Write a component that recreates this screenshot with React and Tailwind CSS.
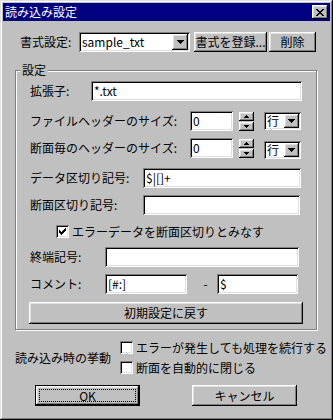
import React from "react";

const font = { fontFamily: '"Noto Sans CJK JP", "MS UI Gothic", sans-serif' };

const sunken =
  "bg-white shadow-[inset_1px_1px_#808080,inset_-1px_-1px_#ffffff,inset_2px_2px_#000000,inset_-2px_-2px_#dfdfdf]";
const raised =
  "bg-[#c0c0c0] shadow-[inset_-1px_-1px_#000000,inset_1px_1px_#ffffff,inset_-2px_-2px_#808080,inset_2px_2px_#dfdfdf]";

function Arrow() {
  return (
    <svg width="7" height="4" viewBox="0 0 7 4" shapeRendering="crispEdges">
      <path d="M0 0h7v1H0zM1 1h5v1H1zM2 2h3v1H2zM3 3h1v1H3z" fill="#000" />
    </svg>
  );
}

function Combo({ className, text, btn = "w-[16px] h-[16px]" }) {
  return (
    <div className={`${sunken} ${className} flex items-center pl-[3px] pr-[2px]`}>
      <span className="flex-1 whitespace-nowrap">{text}</span>
      <div className={`${raised} ${btn} shrink-0 flex items-center justify-center`}>
        <Arrow />
      </div>
    </div>
  );
}

function Field({ className, text = "" }) {
  return (
    <div className={`${sunken} ${className} flex items-center pl-[3px] whitespace-nowrap`}>
      {text}
    </div>
  );
}

function Spinner() {
  return (
    <div className="flex flex-col gap-[1px] w-[15px]">
      <div className={`${raised} h-[9px] flex items-center justify-center`}>
        <svg width="5" height="3" viewBox="0 0 5 3" shapeRendering="crispEdges">
          <path d="M2 0h1v1H2zM1 1h3v1H1zM0 2h5v1H0z" fill="#000" />
        </svg>
      </div>
      <div className={`${raised} h-[9px] flex items-center justify-center`}>
        <svg width="5" height="3" viewBox="0 0 5 3" shapeRendering="crispEdges">
          <path d="M0 0h5v1H0zM1 1h3v1H1zM2 2h1v1H2z" fill="#000" />
        </svg>
      </div>
    </div>
  );
}

function Check({ checked, label }) {
  return (
    <div className="flex items-center h-[13px]">
      <div className={`${sunken} w-[13px] h-[13px] flex items-center justify-center`}>
        {checked && (
          <svg width="7" height="7" viewBox="0 0 7 7" shapeRendering="crispEdges">
            <path
              d="M6 0h1v1H6zM5 1h2v1H5zM0 2h1v1H0zM4 2h3v1H4zM0 3h2v1H0zM3 3h3v1H3zM0 4h5v1H0zM1 5h3v1H1zM2 6h1v1H2z"
              fill="#000"
            />
          </svg>
        )}
      </div>
      <span className="ml-[3px] whitespace-nowrap">{label}</span>
    </div>
  );
}

function Btn({ className, children }) {
  return (
    <div className={`${raised} ${className} flex items-center justify-center whitespace-nowrap`}>
      {children}
    </div>
  );
}

export default function App() {
  return (
    <div
      style={font}
      className="w-[333px] h-[420px] bg-[#c0c0c0] p-[3px] text-[12px] leading-[14px] text-black shadow-[inset_-1px_-1px_#000000,inset_1px_1px_#dfdfdf,inset_-2px_-2px_#808080,inset_2px_2px_#ffffff]"
    >
      {/* title bar */}
      <div className="h-[18px] bg-[#000080] flex items-center pl-[2px] pr-[2px]">
        <span className="flex-1 text-white">読み込み設定</span>
        <div className={`${raised} w-[16px] h-[14px] flex items-center justify-center`}>
          <svg width="8" height="7" viewBox="0 0 8 7" shapeRendering="crispEdges">
            <path
              d="M0 0h2v1H0zM6 0h2v1H6zM1 1h2v1H1zM5 1h2v1H5zM2 2h4v1H2zM3 3h2v1H3zM2 4h4v1H2zM1 5h2v1H1zM5 5h2v1H5zM0 6h2v1H0zM6 6h2v1H6z"
              fill="#000"
            />
          </svg>
        </div>
      </div>

      {/* format row */}
      <div className="flex items-center h-[20px] mt-[11px] pl-[17px]">
        <span className="w-[59px]">書式設定:</span>
        <Combo className="w-[111px] h-[20px]" text="sample_txt" />
        <Btn className="ml-[4px] w-[73px] h-[20px]">書式を登録...</Btn>
        <Btn className="ml-[2px] w-[47px] h-[20px]">削除</Btn>
      </div>

      {/* settings group */}
      <div className="relative mt-[18px] ml-[12px] w-[302px] h-[260px] border border-[#808080] shadow-[1px_1px_#ffffff,inset_1px_1px_#ffffff] pt-[10px] pl-[14px]">
        <span className="absolute left-[4px] top-[-8px] px-[2px] bg-[#c0c0c0]">設定</span>

        <div className="flex items-center h-[20px]">
          <span className="w-[61px]">拡張子:</span>
          <Field className="w-[211px] h-[20px]" text="*.txt" />
        </div>

        <div className="flex items-center h-[20px] mt-[10px]">
          <span className="w-[160px] whitespace-nowrap">ファイルヘッダーのサイズ:</span>
          <Field className="w-[43px] h-[20px]" text="0" />
          <div className="ml-[6px]">
            <Spinner />
          </div>
          <Combo className="ml-[10px] w-[37px] h-[18px]" text="行" btn="w-[15px] h-[14px]" />
        </div>

        <div className="flex items-center h-[20px] mt-[7px]">
          <span className="w-[160px] whitespace-nowrap">断面毎のヘッダーのサイズ:</span>
          <Field className="w-[43px] h-[20px]" text="0" />
          <div className="ml-[6px]">
            <Spinner />
          </div>
          <Combo className="ml-[10px] w-[37px] h-[18px] mt-[3px]" text="行" btn="w-[15px] h-[14px]" />
        </div>

        <div className="flex items-center h-[20px] mt-[10px]">
          <span className="w-[113px] whitespace-nowrap">データ区切り記号:</span>
          <Field className="w-[158px] h-[20px]" text="$|[]+" />
        </div>

        <div className="flex items-center h-[20px] mt-[7px]">
          <span className="w-[113px] whitespace-nowrap">断面区切り記号:</span>
          <Field className="w-[157px] h-[20px]" />
        </div>

        <div className="mt-[10px] ml-[26px]">
          <Check checked label="エラーデータを断面区切りとみなす" />
        </div>

        <div className="flex items-center h-[20px] mt-[9px]">
          <span className="w-[75px]">終端記号:</span>
          <Field className="w-[194px] h-[20px]" />
        </div>

        <div className="flex items-center h-[20px] mt-[7px]">
          <span className="w-[75px]">コメント:</span>
          <Field className="w-[82px] h-[20px]" text="[#:]" />
          <span className="w-[30px] pl-[7px] text-center">-</span>
          <Field className="w-[81px] h-[20px]" text="$" />
        </div>

        <Btn className="mt-[8px] ml-[-1px] w-[274px] h-[22px]">初期設定に戻す</Btn>
      </div>

      {/* behaviour */}
      <div className="flex mt-[11px] ml-[12px]">
        <span className="w-[105px] self-center whitespace-nowrap">読み込み時の挙動</span>
        <div className="flex flex-col gap-[7px]">
          <Check label="エラーが発生しても処理を続行する" />
          <Check label="断面を自動的に閉じる" />
        </div>
      </div>

      {/* buttons */}
      <div className="flex mt-[11px] ml-[32px]">
        <div className="w-[105px] h-[21px] border border-black">
          <div className={`${raised} w-full h-full p-[3px]`}>
            <div className="w-full h-full border border-dotted border-black flex items-center justify-center">
              OK
            </div>
          </div>
        </div>
        <Btn className="ml-[52px] w-[105px] h-[21px]">キャンセル</Btn>
      </div>
    </div>
  );
}
